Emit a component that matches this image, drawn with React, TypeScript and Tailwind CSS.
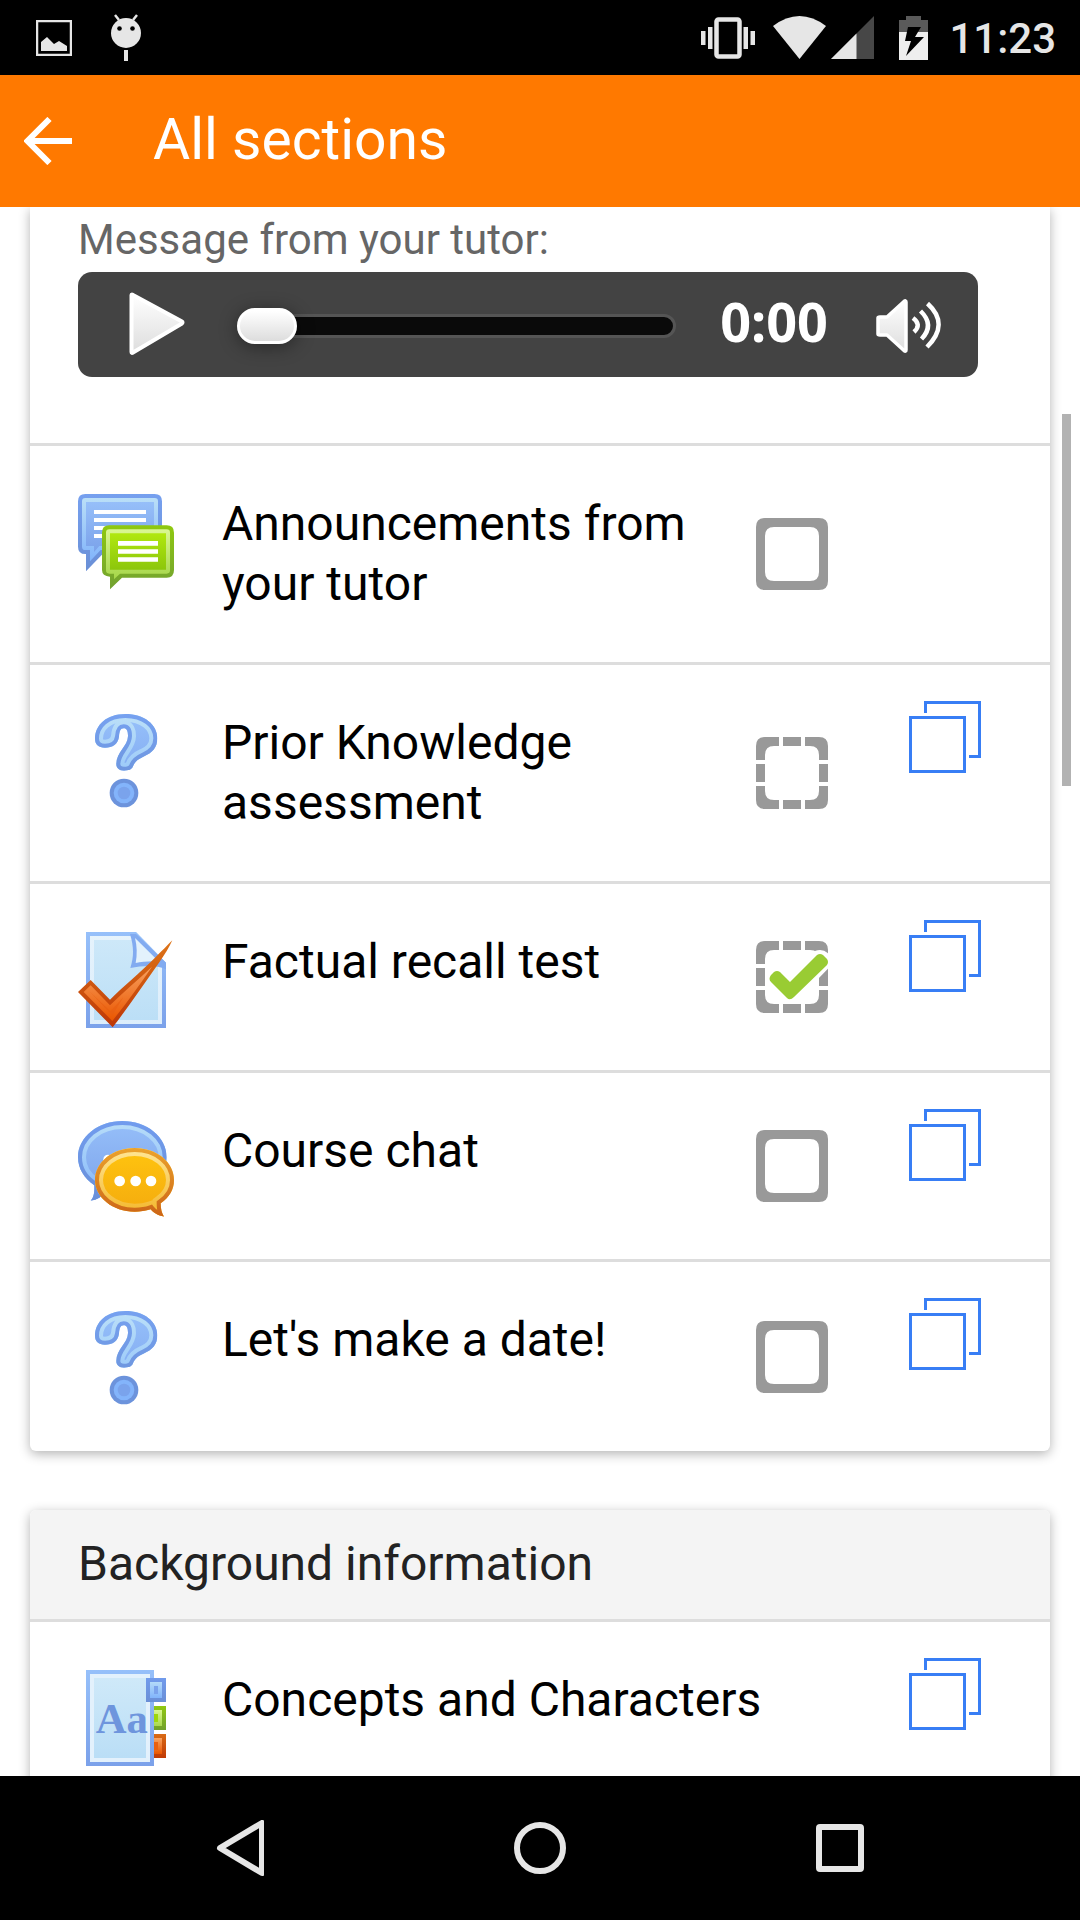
import { useState, type ReactNode } from "react";

/** Draws a closed shape with a dark rim, a light inner rim and a filled core. */
function Rimmed({ id, d, core, light, dark }: { id: string; d: string; core: string; light: string; dark: string }) {
  return (
    <g>
      <clipPath id={`${id}-clip`}>
        <path d={d} />
      </clipPath>
      <g clipPath={`url(#${id}-clip)`}>
        <path d={d} fill={core} stroke={light} strokeWidth="48" />
        <path d={d} fill="none" stroke={dark} strokeWidth="24" />
      </g>
    </g>
  );
}

function Gradient({ id, from, to }: { id: string; from: string; to: string }) {
  return (
    <linearGradient id={id} x1="0" y1="0" x2="0" y2="1">
      <stop offset="0" stopColor={from} />
      <stop offset="1" stopColor={to} />
    </linearGradient>
  );
}

function ForumIcon() {
  return (
    <svg viewBox="54 72 288 288" className="size-24" aria-hidden="true">
      <defs>
        <Gradient id="fo-core" from="#96bff9" to="#7ba2ea" />
        <Gradient id="fo-light" from="#badff7" to="#81b4fb" />
        <Gradient id="fo-dark" from="#76a0ef" to="#6a8fd6" />
        <Gradient id="fo-gcore" from="#b0e80e" to="#8cc60c" />
        <Gradient id="fo-glight" from="#daf792" to="#a5d648" />
        <Gradient id="fo-gdark" from="#8fc90f" to="#71a032" />
      </defs>
      <path d="M76 72H284Q306 72 306 94V230Q306 252 284 252H128L78 304V252H76Q54 252 54 230V94Q54 72 76 72Z" fill="url(#fo-dark)" />
      <path d="M76 84H284Q294 84 294 94V230Q294 240 284 240H122L90 274V240H76Q66 240 66 230V94Q66 84 76 84Z" fill="url(#fo-light)" />
      <path d="M78 96H282V228H118L102 246V228H78Z" fill="url(#fo-core)" />
      <path d="M102 120H258V132H102ZM102 144H258V156H102ZM102 168H258V180H102ZM102 192H258V204H102Z" fill="#fff" />
      <path d="M148 166H320Q342 166 342 188V300Q342 323 320 323H186L150 358V320Q126 318 126 300V188Q126 166 148 166Z" fill="url(#fo-gdark)" />
      <path d="M148 178H320Q330 178 330 188V301Q330 311 320 311H180L162 328V311H148Q138 311 138 301V188Q138 178 148 178Z" fill="url(#fo-glight)" />
      <path d="M150 190H318V299H150Z" fill="url(#fo-gcore)" />
      <path d="M174 213H294V227H174ZM174 238H294V251H174ZM174 262H294V275H174Z" fill="#fff" />
    </svg>
  );
}

function QuestionIcon({ id }: { id: string }) {
  return (
    <svg viewBox="54 729 288 288" className="size-24" aria-hidden="true">
      <defs>
        <Gradient id={`${id}-core`} from="#97c1fa" to="#84adf2" />
        <Gradient id={`${id}-light`} from="#bce0f8" to="#9ccaf9" />
        <Gradient id={`${id}-dark`} from="#76a1f0" to="#6f97e0" />
      </defs>
      <Rimmed
        id={id}
        d="M105 806C105 765 140 732 196 732C252 732 292 763 292 805C292 832 278 849 250 860C232 868 224 876 219 889C215 899 207 902 192 902C177 902 169 894 169 882C169 846 204 828 204 798C204 783 200 775 191 775C181 775 178 785 177 800C174 822 158 833 135 833C115 833 105 822 105 806Z"
        core={`url(#${id}-core)`}
        light={`url(#${id}-light)`}
        dark={`url(#${id}-dark)`}
      />
      <circle cx="192" cy="969" r="43" fill="#6c93dc" />
      <circle cx="192" cy="969" r="31" fill="#83b4fb" />
      <circle cx="192" cy="969" r="19" fill="#7aa3ec" />
    </svg>
  );
}

function QuizIcon() {
  return (
    <svg viewBox="54 66 288 288" className="size-24" aria-hidden="true">
      <defs>
        <Gradient id="qz-core" from="#cfe9f9" to="#badef6" />
        <Gradient id="qz-light" from="#e6f3fc" to="#dcedfb" />
        <Gradient id="qz-dark" from="#96c0fa" to="#7ba1ea" />
        <Gradient id="qz-rim" from="#de7518" to="#bd3607" />
        <Gradient id="qz-check" from="#f7a05f" to="#ea5600" />
      </defs>
      <Rimmed id="qz" d="M78 66H228L318 158V354H78Z" core="url(#qz-core)" light="url(#qz-light)" dark="url(#qz-dark)" />
      <path d="M210 72H228L318 158V178C286 163 246 168 211 174C222 140 222 112 210 72Z" fill="#82abf0" />
      <path d="M225 84L297 155C272 152 246 156 227 159C232 134 231 108 225 84Z" fill="#e3f2fc" />
      <path d="M54 246L92 210L150 269C186 232 240 188 288 140C306 123 322 106 337 91C328 112 314 134 298 157C252 222 206 290 158 352Z" fill="url(#qz-rim)" />
      <path d="M71 246L92 226L150 286C190 246 236 208 276 170C240 224 200 278 157 333Z" fill="url(#qz-check)" />
      <path d="M88 244L151 304L190 262L157 316Z" fill="#e85d10" opacity="0.6" />
    </svg>
  );
}

function ChatIcon() {
  return (
    <svg viewBox="54 633 288 288" className="size-24" aria-hidden="true">
      <defs>
        <Gradient id="ch-core" from="#96bff9" to="#7ba2ea" />
        <Gradient id="ch-light" from="#b9def8" to="#81b4fb" />
        <Gradient id="ch-dark" from="#719cee" to="#6a8fd8" />
        <Gradient id="ch-ocore" from="#ffc50f" to="#f4a90e" />
        <Gradient id="ch-olight" from="#ffe797" to="#f3b528" />
        <Gradient id="ch-odark" from="#eba22c" to="#cc6417" />
      </defs>
      <Rimmed
        id="ch-b"
        d="M187 633C260 633 320 680 320 742C320 802 260 851 187 851C170 851 150 848 138 845C128 858 110 870 92 872C102 862 104 845 103 826C72 806 54 775 54 742C54 680 115 633 187 633Z"
        core="url(#ch-core)"
        light="url(#ch-light)"
        dark="url(#ch-dark)"
      />
      <circle cx="144" cy="748" r="14" fill="#fff" />
      <Rimmed
        id="ch-o"
        d="M224 714C290 714 342 757 342 810C342 838 328 862 302 880C302 896 305 910 312 920C294 917 280 908 272 898C258 903 240 905 224 905C158 905 105 862 105 810C105 757 158 714 224 714Z"
        core="url(#ch-ocore)"
        light="url(#ch-olight)"
        dark="url(#ch-odark)"
      />
      <circle cx="179" cy="813" r="16" fill="#fff" />
      <circle cx="227" cy="813" r="16" fill="#fff" />
      <circle cx="273" cy="813" r="16" fill="#fff" />
    </svg>
  );
}

function GlossaryIcon() {
  return (
    <svg viewBox="234 750 288 288" className="size-24" aria-hidden="true">
      <defs>
        <Gradient id="gl-core" from="#cfe9f9" to="#badef6" />
        <Gradient id="gl-dark" from="#96c0fa" to="#7ba1ea" />
        <Gradient id="gl-b" from="#719bec" to="#6a8fd6" />
        <Gradient id="gl-bl" from="#b4dbf9" to="#81b4fb" />
        <Gradient id="gl-g" from="#90c811" to="#71a02c" />
        <Gradient id="gl-gl" from="#d8f68f" to="#a9d84e" />
        <Gradient id="gl-o" from="#d96b15" to="#c03a06" />
        <Gradient id="gl-ol" from="#f8a362" to="#ea5600" />
      </defs>
      <path d="M258 750H462V1038H258Z" fill="url(#gl-dark)" />
      <path d="M270 762H450V1026H270Z" fill="#e3f1fc" />
      <path d="M282 774H438V1014H282Z" fill="url(#gl-core)" />
      <path d="M438 774H498V846H438Z" fill="url(#gl-b)" />
      <path d="M450 786H486V834H450Z" fill="url(#gl-bl)" />
      <path d="M462 798H474V822H462Z" fill="#7ba3ec" />
      <path d="M462 858H498V930H462Z" fill="url(#gl-g)" />
      <path d="M462 870H486V918H462Z" fill="url(#gl-gl)" />
      <path d="M462 882H474V906H462Z" fill="#9dd60e" />
      <path d="M462 942H498V1014H462Z" fill="url(#gl-o)" />
      <path d="M462 954H486V1002H462Z" fill="url(#gl-ol)" />
      <path d="M462 966H474V990H462Z" fill="#ea6010" />
      <text x="287" y="940" fontSize="128" fill="#6e95dd" className="font-['Liberation_Serif',serif] font-bold">
        Aa
      </text>
    </svg>
  );
}

function BoxFrame({ automatic, done }: { automatic: boolean; done: boolean }) {
  return (
    <svg viewBox="0 0 72 72" className="col-start-1 row-start-1 size-[72px]" aria-hidden="true">
      <path
        fillRule="evenodd"
        fill="#999"
        d="M9 0H63Q72 0 72 9V63Q72 72 63 72H9Q0 72 0 63V9Q0 0 9 0ZM18 9Q9 9 9 18V54Q9 63 18 63H54Q63 63 63 54V18Q63 9 54 9Z"
      />
      {automatic && (
        <path d="M23 0H27V10H23ZM45 0H49V10H45ZM23 62H27V72H23ZM45 62H49V72H45ZM0 23H10V27H0ZM0 45H10V49H0ZM62 23H72V27H62ZM62 45H72V49H62Z" fill="#fff" />
      )}
      {done && (
        <>
          <path d="M21 38L34 51L64 20" fill="none" stroke="#fff" strokeWidth="22" strokeLinejoin="round" strokeLinecap="round" />
          <path
            d="M15 34L18 31Q21 29 24 31L34 41L61 14Q64 12 67 14L71 18Q73 21 71 24L38 56Q34 60 31 57L15 41Q12 38 15 34Z"
            fill="#9c3"
          />
        </>
      )}
    </svg>
  );
}

function CompletionBox({ label, automatic, initial }: { label: string; automatic: boolean; initial: boolean }) {
  const [done, setDone] = useState(initial);
  return (
    <span className="grid shrink-0">
      <BoxFrame automatic={automatic} done={done} />
      <input
        type="checkbox"
        aria-label={`Completion of ${label}`}
        checked={done}
        onChange={(e) => setDone(e.target.checked)}
        className="col-start-1 row-start-1 size-[72px] cursor-pointer appearance-none"
      />
    </span>
  );
}

function CopyButton({ label }: { label: string }) {
  return (
    <button type="button" aria-label={`Open ${label} in a new window`} className="mt-9 block size-[72px]">
      <svg viewBox="0 0 24 24" fill="none" stroke="#387ef5" className="size-[72px]" aria-hidden="true">
        <path d="M.5 5.5H18.5V23.5H.5ZM5.5 4V.5H23.5V18.5H20" />
      </svg>
    </button>
  );
}

type Activity = {
  title: string;
  icon: ReactNode;
  completion?: "manual" | "automatic";
  done?: boolean;
  copy?: boolean;
};

const starterActivities: Activity[] = [
  { title: "Announcements from your tutor", icon: <ForumIcon />, completion: "manual" },
  { title: "Prior Knowledge assessment", icon: <QuestionIcon id="q-prior" />, completion: "automatic", copy: true },
  { title: "Factual recall test", icon: <QuizIcon />, completion: "automatic", done: true, copy: true },
  { title: "Course chat", icon: <ChatIcon />, completion: "manual", copy: true },
  { title: "Let's make a date!", icon: <QuestionIcon id="q-date" />, completion: "manual", copy: true },
];

const backgroundActivities: Activity[] = [{ title: "Concepts and Characters", icon: <GlossaryIcon />, copy: true }];

function ActivityRow({ activity }: { activity: Activity }) {
  return (
    <li className="flex min-h-[189px] border-t-3 border-[#ddd] pr-[69px] pl-12 last:min-h-48">
      <a href="#activity" className="flex flex-1 gap-12 pt-12 pb-[42px] text-[48px] leading-[60px] text-black">
        <span className="shrink-0">{activity.icon}</span>
        <span className={activity.completion ? "max-w-[480px] pb-1.5" : "pb-1.5"}>{activity.title}</span>
      </a>
      <div className="flex shrink-0 gap-[81px]">
        {activity.completion && (
          <div className="flex items-center">
            <CompletionBox label={activity.title} automatic={activity.completion === "automatic"} initial={!!activity.done} />
          </div>
        )}
        <div className="w-[72px]">{activity.copy && <CopyButton label={activity.title} />}</div>
      </div>
    </li>
  );
}

function AudioPlayer() {
  return (
    <div className="flex h-[105px] items-center rounded-[14px] bg-[#434343] pr-9 pl-[51px]">
      <button type="button" aria-label="Play">
        <svg viewBox="0 0 56 64" className="mb-0.5 h-16 w-14" aria-hidden="true">
          <defs>
            <Gradient id="play-fill" from="#ffffff" to="#dddddd" />
          </defs>
          <path d="M2.500 3Q2.500 2 4 3L53 29.500Q54 30 53 31.500L4 60.500Q2.500 61.500 2.500 60Z" fill="url(#play-fill)" stroke="#fff" strokeWidth="4" strokeLinejoin="round" />
        </svg>
      </button>
      <input
        type="range"
        aria-label="Playback position"
        min={0}
        max={100}
        defaultValue={0}
        className="mt-0.5 ml-[52px] h-9 min-w-0 flex-1 appearance-none bg-transparent [&::-webkit-slider-runnable-track]:h-6 [&::-webkit-slider-runnable-track]:rounded-full [&::-webkit-slider-runnable-track]:border-3 [&::-webkit-slider-runnable-track]:border-[#555] [&::-webkit-slider-runnable-track]:bg-[#0a0a0a] [&::-webkit-slider-thumb]:-mt-[9px] [&::-webkit-slider-thumb]:-ml-[3px] [&::-webkit-slider-thumb]:h-9 [&::-webkit-slider-thumb]:w-[60px] [&::-webkit-slider-thumb]:appearance-none [&::-webkit-slider-thumb]:rounded-full [&::-webkit-slider-thumb]:border-3 [&::-webkit-slider-thumb]:border-white [&::-webkit-slider-thumb]:bg-linear-to-b [&::-webkit-slider-thumb]:from-white [&::-webkit-slider-thumb]:to-[#ddd] [&::-webkit-slider-thumb]:shadow-[0_3px_18px_rgba(0,0,0,0.4)]"
      />
      <span className="ml-11 pb-2 font-['Noto_Sans',sans-serif] text-[54px] leading-[60px] font-bold text-white">0:00</span>
      <button type="button" aria-label="Mute" className="ml-12">
        <svg viewBox="0 0 66 54" className="mt-0.5 h-[54px] w-[66px]" aria-hidden="true">
          <path d="M2 19Q2 18 4 18H11L28 2.500Q30 1 30 3V51Q30 53 28 51.500L11 36H4Q2 36 2 35Z" fill="url(#play-fill)" stroke="#fff" strokeWidth="3.500" strokeLinejoin="round" />
          <path d="M37 19Q46 25.500 38 33M44.500 12Q59 26 45.500 40M51.500 4.500Q74 25 51 48" fill="none" stroke="#fff" strokeWidth="4.500" />
        </svg>
      </button>
    </div>
  );
}

function StatusBar() {
  return (
    <div className="flex h-[75px] shrink-0 items-center bg-black pr-6 pl-9">
      <svg viewBox="0 0 36 36" className="size-9" aria-hidden="true">
        <path d="M1 1H35V35H1Z" fill="none" stroke="#e6e6e6" strokeWidth="2.500" />
        <path d="M5 22L11 17L18 24L23 21L31 26V31H5Z" fill="#e6e6e6" />
      </svg>
      <svg viewBox="0 0 30 48" className="ml-[39px] h-12 w-[30px]" aria-hidden="true">
        <path d="M4 1L8 6M26 1L22 6" stroke="#e6e6e6" strokeWidth="2.500" />
        <circle cx="15" cy="19" r="15" fill="#e6e6e6" />
        <circle cx="8.500" cy="14.500" r="2.300" fill="#000" />
        <circle cx="21.500" cy="14.500" r="2.300" fill="#000" />
        <path d="M13 36H17V47H13Z" fill="#e6e6e6" />
      </svg>
      <div className="ml-auto flex items-center">
        <svg viewBox="0 0 54 42" className="h-[42px] w-[54px]" aria-hidden="true">
          <rect x="15.500" y="2.500" width="23" height="37" rx="2" fill="none" stroke="#e6e6e6" strokeWidth="4.500" />
          <path d="M0 14H4.500V28H0ZM7 10H11.500V32H7ZM42.500 10H47V32H42.500ZM49.500 14H54V28H49.500Z" fill="#e6e6e6" />
        </svg>
        <svg viewBox="0 0 53 43" className="ml-[18px] h-[43px] w-[53px]" aria-hidden="true">
          <path d="M0 10Q26.500 -10 53 10L26.500 43Z" fill="#e6e6e6" />
        </svg>
        <svg viewBox="0 0 43 43" className="ml-[5px] size-[43px]" aria-hidden="true">
          <path d="M43 0V43H0Z" fill="#474747" />
          <path d="M25.500 17.500V43H0Z" fill="#e6e6e6" />
        </svg>
        <svg viewBox="0 0 29 44" className="ml-[25px] h-11 w-[29px]" aria-hidden="true">
          <path d="M7 0H22V4H29V16H0V4H7Z" fill="#5a5a5a" />
          <path d="M0 16H29V44H0Z" fill="#eee" />
          <path d="M9 11H22L16 21H25L7 40L12 25H6Z" fill="#000" />
        </svg>
        <span className="ml-[21px] pt-0.5 text-[42px] leading-[48px] font-medium text-[#e6e6e6]">11:23</span>
      </div>
    </div>
  );
}

function NavigationBar() {
  return (
    <nav className="flex h-36 shrink-0 items-center justify-center gap-[250px] bg-black">
      <button type="button" aria-label="Back">
        <svg viewBox="0 0 48 56" fill="none" stroke="#e6e6e6" strokeWidth="6" strokeLinejoin="round" className="h-14 w-12" aria-hidden="true">
          <path d="M46 3V53L4 28Z" />
        </svg>
      </button>
      <button type="button" aria-label="Home">
        <svg viewBox="0 0 52 52" fill="none" stroke="#e6e6e6" strokeWidth="6" className="size-[52px]" aria-hidden="true">
          <circle cx="26" cy="26" r="23" />
        </svg>
      </button>
      <button type="button" aria-label="Recent apps">
        <svg viewBox="0 0 48 48" fill="none" stroke="#e6e6e6" strokeWidth="6" className="size-12" aria-hidden="true">
          <rect x="3" y="3" width="42" height="42" rx="1" />
        </svg>
      </button>
    </nav>
  );
}

export default function App() {
  return (
    <div className="flex h-screen flex-col overflow-hidden bg-white font-[Roboto,sans-serif]">
      <StatusBar />
      <header className="flex h-[132px] shrink-0 items-center bg-[#ff7900] pl-6 text-white">
        <button type="button" aria-label="Go back">
          <svg viewBox="0 0 48 48" fill="none" stroke="#fff" strokeWidth="6" className="size-12" aria-hidden="true">
            <path d="M25.500 2L3.500 24L25.500 46M3 24H48" />
          </svg>
        </button>
        <h1 className="ml-[81px] pb-0.5 text-[57px] leading-[66px]">All sections</h1>
      </header>
      <main className="relative flex-1 overflow-hidden px-[30px]">
        <section className="mb-[59px] rounded-b-md bg-white shadow-[0_3px_12px_rgba(0,0,0,0.3)]">
          <div className="pt-1.5 pr-[72px] pb-[66px] pl-12">
            <p className="pb-[5px] text-[42px] leading-[54px] text-[#666]">Message from your tutor:</p>
            <AudioPlayer />
          </div>
          <ul>
            {starterActivities.map((activity) => (
              <ActivityRow key={activity.title} activity={activity} />
            ))}
          </ul>
        </section>
        <section className="rounded-t-md bg-white shadow-[0_3px_12px_rgba(0,0,0,0.3)]">
          <h2 className="rounded-t-md bg-[#f4f4f4] px-12 pt-6 pb-[25px] text-[48px] leading-[60px] text-[#222]">Background information</h2>
          <ul>
            {backgroundActivities.map((activity) => (
              <ActivityRow key={activity.title} activity={activity} />
            ))}
          </ul>
        </section>
        <div className="absolute top-[207px] right-[9px] h-[372px] w-[9px] bg-[#b2b2b2]" />
      </main>
      <NavigationBar />
    </div>
  );
}
